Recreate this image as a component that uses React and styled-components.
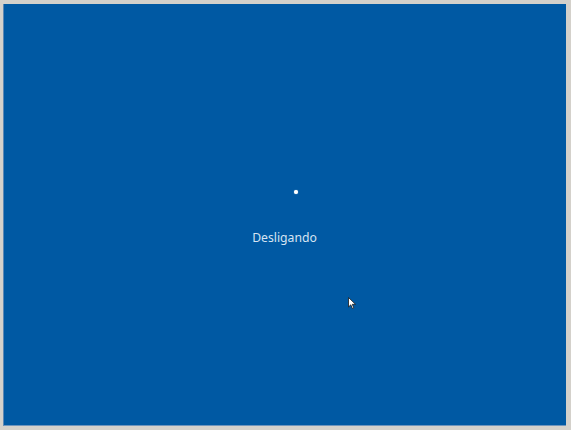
import * as React from "react"
import styled, { createGlobalStyle } from "styled-components"

const GlobalStyle = createGlobalStyle`
    html, body {
        margin: 0;
        padding: 0;
        background: #d4d1cb;
    }
    #root {
        width: 571px;
        height: 430px;
    }
`

const Frame = styled.div`
    box-sizing: border-box;
    width: 571px;
    height: 430px;
    padding: 4px 5px 4px 3px;
    background: #d4d1cb;
`

const Screen = styled.div`
    position: relative;
    box-sizing: border-box;
    height: 100%;
    background: #0059a3;
    border-left: 1px solid #5c87b3;
    border-bottom: 1px solid #6f95bd;
    display: flex;
    flex-direction: column;
    align-items: center;
    padding-top: 186px;
`

const Spinner = styled.div`
    width: 4px;
    height: 4px;
    border-radius: 50%;
    background: #ffffff;
    box-shadow: 0 0 1px rgba(255, 255, 255, 0.8);
    margin-left: 22px;
`

const Status = styled.div`
    margin-top: 35px;
    margin-right: 1px;
    font-family: "Noto Sans", "Open Sans", sans-serif;
    font-size: 12.2px;
    color: #d7e4f2;
`

const Cursor = styled.svg`
    position: absolute;
    left: 344px;
    top: 293px;
`

const App = () => {
    return (
        <>
            <GlobalStyle />
            <Frame>
                <Screen>
                    <Spinner />
                    <Status>Desligando</Status>
                    <Cursor width="9" height="13" viewBox="0 0 9 13">
                        <path d="M0.5 0.5 L0.5 10 L2.8 7.8 L4.4 11.5 L5.8 10.9 L4.3 7.3 L7.5 7.3 Z" fill="#ffffff" stroke="#1a1a1a" strokeWidth="0.8" />
                    </Cursor>
                </Screen>
            </Frame>
        </>
    )
}

export default App
